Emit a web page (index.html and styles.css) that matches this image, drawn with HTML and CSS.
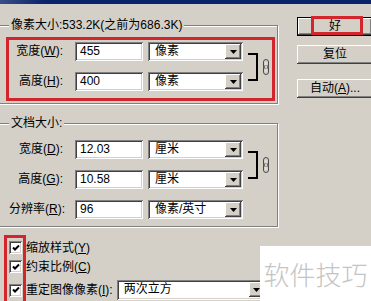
FILE: index.html
```html
<!DOCTYPE html>
<html lang="zh-CN">
<head>
    <meta charset="UTF-8">
    <meta name="viewport" content="width=device-width, initial-scale=1.0">
    <title>图像大小</title>
    <link rel="stylesheet" href="styles.css">
</head>
<body>
    <div class="titlebar"></div>
    <div class="dialog">
        <div class="main">
            <div class="group group-pixel">
                <div class="legend">像素大小:533.2K(之前为686.3K)</div>
                <div class="mark-box">
                    <div class="rows">
                        <span class="lbl">宽度(<u>W</u>):</span>
                        <span class="field">455</span>
                        <span class="select"><span class="val">像素</span><span class="arrow"><svg width="7" height="4" viewBox="0 0 7 4"><polygon points="0,0 7,0 3.5,4" fill="#000"/></svg></span></span>
                        <span class="bracket"></span>
                        <svg class="chain" width="8" height="16" viewBox="0 0 8 16"><rect x="1.5" y="0.5" width="5" height="9" rx="2.5" fill="none" stroke="#4a4a4a"/><rect x="1.5" y="6.5" width="5" height="9" rx="2.5" fill="none" stroke="#4a4a4a"/><line x1="4" y1="3" x2="4" y2="13" stroke="#e6e6e6"/></svg>

                        <span class="lbl">高度(<u>H</u>):</span>
                        <span class="field">400</span>
                        <span class="select"><span class="val">像素</span><span class="arrow"><svg width="7" height="4" viewBox="0 0 7 4"><polygon points="0,0 7,0 3.5,4" fill="#000"/></svg></span></span>
                    </div>
                </div>
            </div>

            <div class="group group-doc">
                <div class="legend">文档大小:</div>
                <div class="rows">
                    <span class="lbl">宽度(<u>D</u>):</span>
                    <span class="field">12.03</span>
                    <span class="select"><span class="val">厘米</span><span class="arrow"><svg width="7" height="4" viewBox="0 0 7 4"><polygon points="0,0 7,0 3.5,4" fill="#000"/></svg></span></span>
                    <span class="bracket"></span>
                    <svg class="chain" width="8" height="16" viewBox="0 0 8 16"><rect x="1.5" y="0.5" width="5" height="9" rx="2.5" fill="none" stroke="#4a4a4a"/><rect x="1.5" y="6.5" width="5" height="9" rx="2.5" fill="none" stroke="#4a4a4a"/><line x1="4" y1="3" x2="4" y2="13" stroke="#e6e6e6"/></svg>

                    <span class="lbl">高度(<u>G</u>):</span>
                    <span class="field">10.58</span>
                    <span class="select"><span class="val">厘米</span><span class="arrow"><svg width="7" height="4" viewBox="0 0 7 4"><polygon points="0,0 7,0 3.5,4" fill="#000"/></svg></span></span>

                    <span class="lbl">分辨率(<u>R</u>):</span>
                    <span class="field">96</span>
                    <span class="select"><span class="val">像素/英寸</span><span class="arrow"><svg width="7" height="4" viewBox="0 0 7 4"><polygon points="0,0 7,0 3.5,4" fill="#000"/></svg></span></span>
                </div>
            </div>

            <div class="options">
                <div class="opt">
                    <span class="check"><svg width="8" height="8" viewBox="0 0 8 8"><polyline points="1,3.5 3,5.5 7,1.5" fill="none" stroke="#000" stroke-width="2"/></svg></span>
                    <span class="opt-label">缩放样式(<u>Y</u>)</span>
                </div>
                <div class="opt">
                    <span class="check"><svg width="8" height="8" viewBox="0 0 8 8"><polyline points="1,3.5 3,5.5 7,1.5" fill="none" stroke="#000" stroke-width="2"/></svg></span>
                    <span class="opt-label">约束比例(<u>C</u>)</span>
                </div>
                <div class="opt opt-resample">
                    <span class="check"><svg width="8" height="8" viewBox="0 0 8 8"><polyline points="1,3.5 3,5.5 7,1.5" fill="none" stroke="#000" stroke-width="2"/></svg></span>
                    <span class="opt-label">重定图像像素(<u>I</u>):</span>
                    <span class="select select-wide"><span class="val">两次立方</span><span class="arrow"><svg width="7" height="4" viewBox="0 0 7 4"><polygon points="0,0 7,0 3.5,4" fill="#000"/></svg></span></span>
                </div>
                <span class="mark-checks"></span>
            </div>
        </div>

        <div class="side">
            <button class="btn btn-default">好<span class="mark-ok"></span></button>
            <button class="btn btn-reset">复位</button>
            <button class="btn btn-auto">自动(<u>A</u>)...</button>
        </div>
    </div>

    <div class="watermark">软件技巧</div>
</body>
</html>
```

FILE: styles.css
```css
* {
    box-sizing: border-box;
}

body {
    margin: 0;
    width: 371px;
    height: 301px;
    overflow: hidden;
    position: relative;
    background-color: #d4d0c8;
    font-family: "Liberation Sans", "Noto Sans CJK SC", sans-serif;
    font-size: 12px;
    line-height: 16px;
    color: #000;
}

u {
    text-decoration: underline;
    text-underline-offset: 1px;
}

.titlebar {
    height: 4px;
    background: linear-gradient(to right, #3b4f86, #0a246a 12%, #0a246a);
}

.dialog {
    display: flex;
    align-items: flex-start;
}

.main {
    width: 279px;
    flex: none;
}

/* etched group boxes */
.group {
    margin-left: -2px;
    width: 280px;
    border: 1px solid #808080;
    box-shadow: inset 1px 1px 0 #fff, 1px 1px 0 #fff;
}

.group-pixel {
    margin-top: 21px;
    padding-bottom: 2px;
}

.group-doc {
    margin-top: 19px;
    padding: 0 0 7px 10px;
}

.legend {
    display: table;
    margin: -9px 0 0 10px;
    padding: 0 2px;
    background-color: #d4d0c8;
    line-height: 16px;
}

.group-doc .legend {
    margin-left: 0;
}

.group-doc .rows {
    margin-top: 9px;
}

.mark-box {
    margin: 4px 0 0 7px;
    width: 269px;
    border: 3px solid #d3262c;
    padding: 2px 0 7px 0;
}

.rows {
    display: grid;
    grid-template-columns: 61px 68px 95px 10px 8px;
    grid-auto-rows: 19px;
    column-gap: 5px;
    row-gap: 11px;
}

.lbl {
    text-align: right;
    padding-right: 7px;
    line-height: 19px;
    white-space: nowrap;
}

.field,
.select {
    height: 19px;
    background-color: #fff;
    box-shadow: inset 1px 1px 0 #808080, inset -1px -1px 0 #fff, inset 2px 2px 0 #404040, inset -2px -2px 0 #d4d0c8;
    line-height: 19px;
    white-space: nowrap;
}

.field {
    padding-left: 5px;
}

.select {
    display: flex;
    padding: 2px;
}

.select .val {
    flex: 1;
    padding-left: 5px;
    line-height: 15px;
    overflow: hidden;
}

.arrow {
    width: 16px;
    height: 15px;
    display: flex;
    align-items: center;
    justify-content: center;
    background-color: #d4d0c8;
    box-shadow: inset -1px -1px 0 #404040, inset 1px 1px 0 #fff, inset -2px -2px 0 #808080;
}

.arrow svg {
    display: block;
    margin-top: 1px;
}

.bracket {
    grid-column: 4;
    grid-row: 1 / 3;
    align-self: center;
    height: 28px;
    border: 2px solid #000;
    border-left: none;
}

.chain {
    grid-column: 5;
    grid-row: 1 / 3;
    align-self: center;
    margin-left: -1px;
}

/* check boxes */
.options {
    position: relative;
    margin-top: 11px;
    padding-left: 9px;
}

.opt {
    display: flex;
    align-items: center;
    height: 19px;
}

.opt-resample {
    margin-top: 4px;
    height: 20px;
}

.check {
    width: 13px;
    height: 13px;
    flex: none;
    display: flex;
    align-items: center;
    justify-content: center;
    background-color: #fff;
    box-shadow: inset 1px 1px 0 #808080, inset -1px -1px 0 #fff, inset 2px 2px 0 #404040, inset -2px -2px 0 #d4d0c8;
}

.check svg {
    display: block;
}

.opt-label {
    margin-left: 4px;
    white-space: nowrap;
}

.select-wide {
    width: 150px;
    height: 20px;
    margin-left: 4px;
    flex: none;
}

.mark-checks {
    position: absolute;
    left: 4px;
    top: -3px;
    width: 22px;
    height: 72px;
    border: 3px solid #d3262c;
}

/* buttons */
.side {
    flex: none;
    width: 76px;
    margin-left: 18px;
    padding-top: 13px;
    display: flex;
    flex-direction: column;
}

.btn {
    position: relative;
    height: 19px;
    width: 76px;
    padding: 0;
    border: none;
    background-color: #d4d0c8;
    font: inherit;
    line-height: 17px;
    color: #000;
    box-shadow: inset -1px -1px 0 #404040, inset 1px 1px 0 #fff, inset -2px -2px 0 #808080;
}

.btn-default {
    border: 1px solid #000;
}

.btn-reset {
    margin-top: 9px;
}

.btn-auto {
    margin-top: 15px;
}

.mark-ok {
    position: absolute;
    left: 13px;
    top: -2px;
    width: 52px;
    height: 19px;
    border: 3px solid #d3262c;
}

.watermark {
    position: absolute;
    right: 0;
    bottom: 0;
    width: 111px;
    height: 55px;
    background-color: #fff;
    color: #c4c4c4;
    font-family: "Noto Sans CJK SC", sans-serif;
    font-size: 26px;
    font-weight: 300;
    line-height: 55px;
    text-align: center;
}
```
